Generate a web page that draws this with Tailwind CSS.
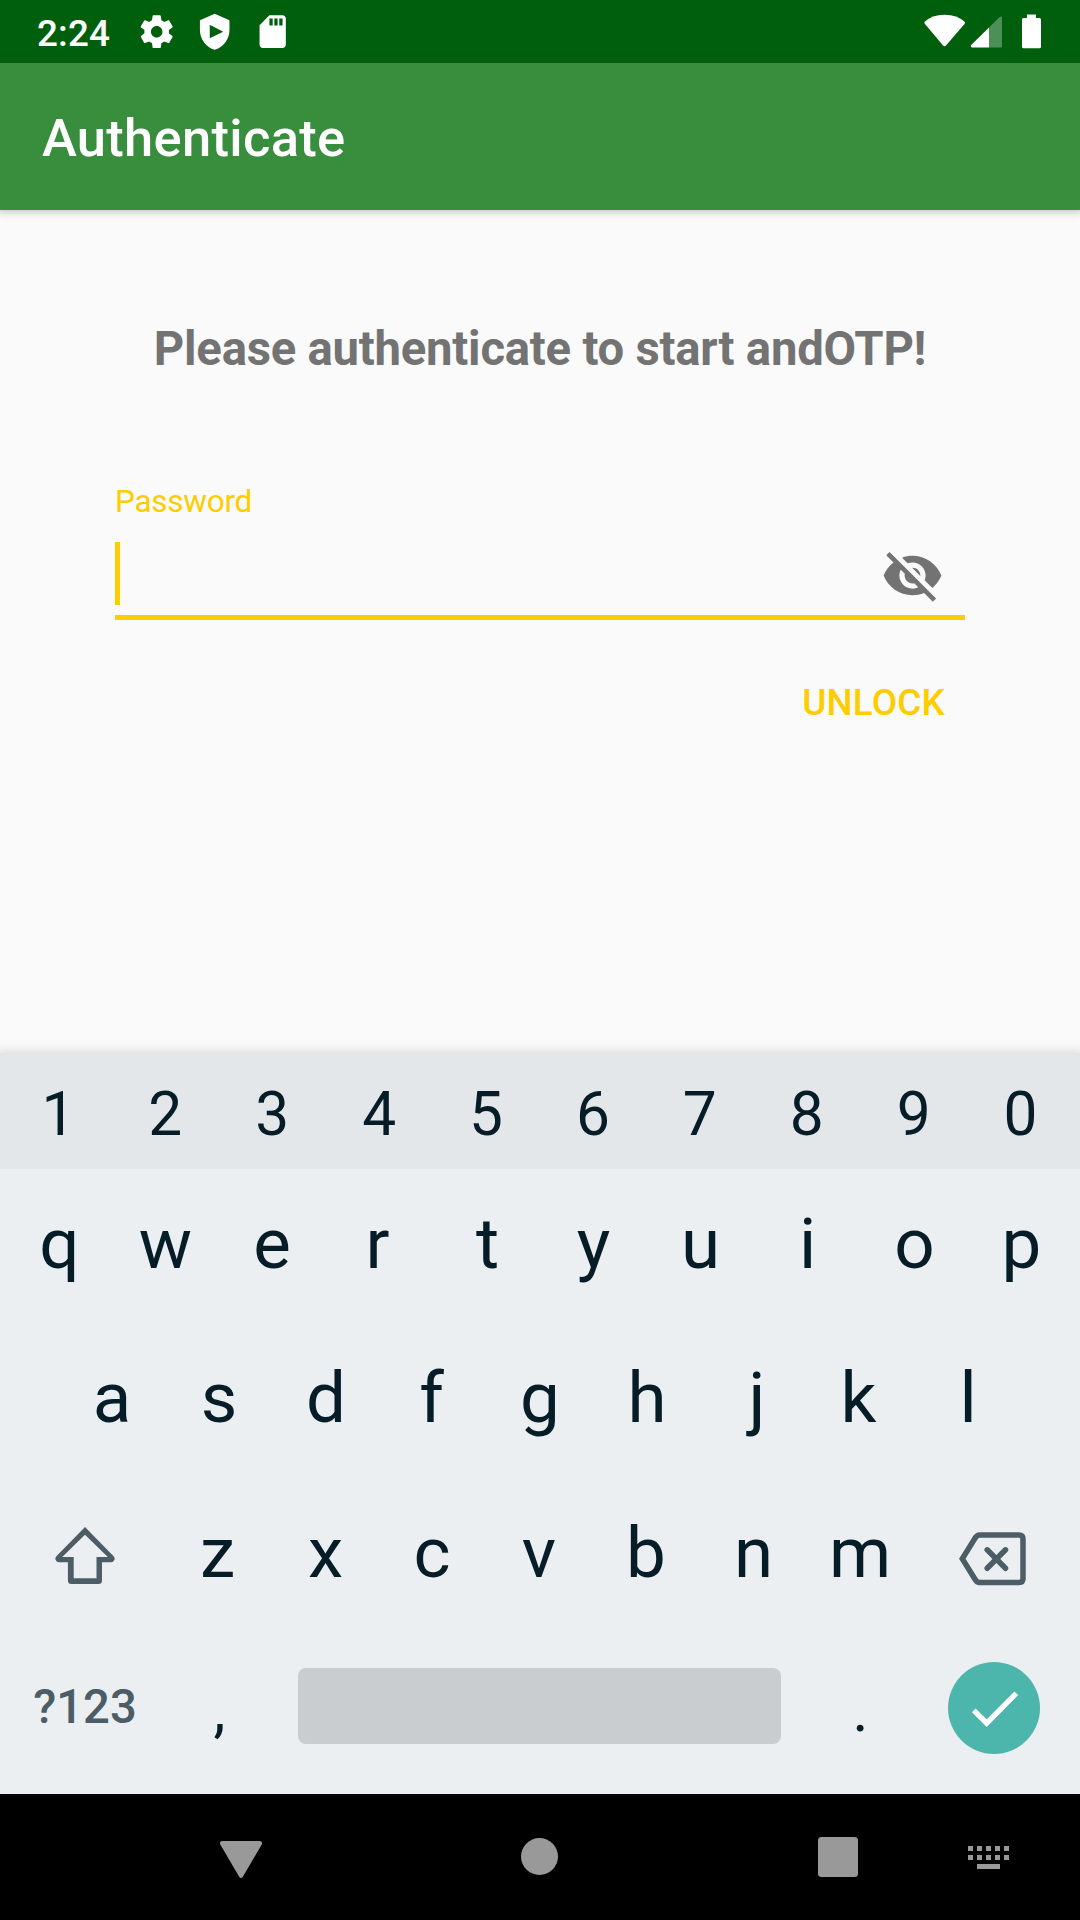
<!DOCTYPE html>
<html lang="en">
<head>
<meta charset="utf-8">
<title>Authenticate</title>
<script src="https://cdn.jsdelivr.net/npm/@tailwindcss/browser@4"></script>
</head>
<body class="w-[1080px] h-[1920px] overflow-hidden bg-[#fafafa] font-['Roboto',sans-serif] flex flex-col">

<!-- Status bar -->
<header class="relative z-10 h-[63px] shrink-0 bg-[#005f0d] flex items-center justify-between pl-[37px] text-white">
  <div class="flex items-center h-full">
    <span class="w-[100px] text-[36.75px] leading-[63px] font-medium pt-[4px] tracking-[0.2px]">2:24</span>
    <div class="flex gap-[18.4px] fill-white">
      <svg class="w-[39.4px] h-[39.4px]" viewBox="0 0 24 24"><path d="M19.43 12.98c.04-.32.07-.64.07-.98s-.03-.66-.07-.98l2.11-1.65c.19-.15.24-.42.12-.64l-2-3.46c-.12-.22-.39-.3-.61-.22l-2.49 1c-.52-.4-1.08-.73-1.69-.98l-.38-2.65C14.46 2.18 14.25 2 14 2h-4c-.25 0-.46.18-.49.42l-.38 2.65c-.61.25-1.17.59-1.69.98l-2.49-1c-.23-.09-.49 0-.61.22l-2 3.46c-.13.22-.07.49.12.64l2.11 1.65c-.04.32-.07.65-.07.98s.03.66.07.98l-2.11 1.65c-.19.15-.24.42-.12.64l2 3.46c.12.22.39.3.61.22l2.49-1c.52.4 1.08.73 1.69.98l.38 2.65c.03.24.24.42.49.42h4c.25 0 .46-.18.49-.42l.38-2.65c.61-.25 1.17-.59 1.69-.98l2.49 1c.23.09.49 0 .61-.22l2-3.46c.12-.22.07-.49-.12-.64l-2.11-1.65zM12 15.5c-1.93 0-3.5-1.57-3.5-3.5s1.57-3.5 3.5-3.5 3.5 1.57 3.5 3.5-1.57 3.5-3.5 3.5z"/></svg>
      <svg class="w-[39.4px] h-[39.4px]" viewBox="0 0 24 24"><path fill-rule="evenodd" d="M12 1 3 5v6c0 5.55 3.84 10.74 9 12 5.16-1.26 9-6.45 9-12V5l-9-4zM9 7.8 17.2 12 9 16z"/></svg>
      <svg class="w-[39.4px] h-[39.4px]" viewBox="0 0 24 24"><path fill-rule="evenodd" d="M18 2h-8L4 8v12c0 1.1.9 2 2 2h12c1.1 0 2-.9 2-2V4c0-1.1-.9-2-2-2zM10 4h2v4.3h-2zM13 4h2v4.3h-2zM16 4h2v4.3h-2z"/></svg>
    </div>
  </div>
  <svg class="w-[120px] h-[36px] mr-[38px]" viewBox="922 13.500 120 36" fill="#fff">
    <path d="M924.400 21.500Q932 14.200 944.500 14.200T965 21.500Q965.300 22.500 964.500 23.500L946 45Q944.500 46.500 943 45L925 23.500Q924.200 22.500 924.400 21.500Z"/>
    <path fill-opacity=".3" d="M989 27 999.600 16.600Q1002 15 1002 18V45.500Q1002 47 1000.500 47H989Z"/>
    <path d="M989 27V47H972Q970 46.500 971.200 44.600Z"/>
    <path d="M1027 14h9v3.500h3.400q1.600 0 1.600 1.600V46.200q0 1.600-1.600 1.600h-15.800q-1.600 0-1.600-1.600V19.100q0-1.600 1.600-1.600h3.400z"/>
  </svg>
</header>

<!-- App bar -->
<div class="h-[147px] shrink-0 bg-[#388e3c] flex items-center pl-[42px] pt-[3px] shadow-[0_0px_8px_2px_rgba(0,0,0,0.22)]">
  <h1 class="text-[52.5px] leading-[60px] font-medium text-white tracking-[0.3px]">Authenticate</h1>
</div>

<!-- Unlock form -->
<main class="h-[843px] shrink-0 px-[115px] pt-[109px] flex flex-col">
  <h2 class="text-center text-[47.25px] leading-[60px] font-bold text-[#737373] whitespace-nowrap tracking-[-0.23px]">Please authenticate to start andOTP!</h2>
  <label class="mt-[103px] text-[31.5px] leading-[40px] text-[#ffcc00] tracking-[-0.25px]">Password</label>
  <div class="mt-[15px] h-[83px] border-b-[5px] border-[#ffcc00] flex items-start justify-between pr-[21px]">
    <span class="mt-[5px] w-[5px] h-[63px] bg-[#ffcc00]"></span>
    <svg class="mt-[7px] w-[63px] h-[63px] fill-[#737373]" viewBox="0 0 24 24"><path d="M12 7c2.760 0 5 2.240 5 5 0 .65-.13 1.260-.36 1.830l2.920 2.920c1.510-1.260 2.700-2.890 3.430-4.750-1.730-4.390-6-7.500-11-7.500-1.400 0-2.740.25-3.980.7l2.160 2.160C10.740 7.130 11.350 7 12 7zM2 4.270l2.280 2.280.46.46C3.080 8.300 1.780 10.020 1 12c1.730 4.390 6 7.500 11 7.500 1.550 0 3.030-.3 4.380-.84l.42.42L19.730 22 21 20.730 3.270 3 2 4.270zM7.530 9.800l1.550 1.550c-.05.21-.08.43-.08.65 0 1.660 1.340 3 3 3 .22 0 .44-.03.65-.08l1.550 1.550c-.67.33-1.410.53-2.200.53-2.760 0-5-2.240-5-5 0-.79.2-1.530.53-2.200zm4.310-.78l3.150 3.150.02-.16c0-1.660-1.340-3-3-3l-.17.010z"/></svg>
  </div>
  <button class="self-end mr-[20px] mt-[58px] text-[36.75px] leading-[50px] font-medium text-[#ffcc00] tracking-[0.25px]">UNLOCK</button>
</main>

<!-- Keyboard -->
<section class="h-[741px] shrink-0 bg-[#ebeff2] text-[#061d27] shadow-[0_0_9px_3px_rgba(0,0,0,0.1)]">
  <div class="h-[116px] bg-[#e3e7ea] pl-[5px] pr-[6px] pt-[7px] grid grid-cols-10 items-center text-center text-[60.4px] leading-[70px]">
    <span>1</span><span>2</span><span>3</span><span>4</span><span>5</span><span>6</span><span>7</span><span>8</span><span>9</span><span>0</span>
  </div>
  <div class="h-[150px] pl-[5px] pr-[5px] grid grid-cols-10 items-center text-center text-[70.9px] leading-[80px]">
    <span class="pl-[2px]">q</span><span>w</span><span class="pr-[1px]">e</span><span class="pr-[4px]">r</span><span class="pl-[2px]">t</span><span>y</span><span>u</span><span>i</span><span>o</span><span>p</span>
  </div>
  <div class="h-[158px] pl-[58.5px] pr-[58.5px] grid grid-cols-9 items-center text-center text-[70.9px] leading-[80px]">
    <span>a</span><span>s</span><span>d</span><span class="pr-[3px]">f</span><span>g</span><span>h</span><span class="pl-[6px]">j</span><span class="pr-[5px]">k</span><span>l</span>
  </div>
  <div class="h-[152px] pl-[5px] pr-[6px] grid grid-cols-[160px_repeat(7,1fr)_160px] items-center text-center text-[70.9px] leading-[80px]">
    <svg class="w-[60px] h-[60px] justify-self-center mt-[6px]" viewBox="0 0 60 60" fill="#4c5d66"><path fill-rule="evenodd" d="M30 1 58.600 30.200A3.600 3.600 0 0 1 56 36.300H47V54.500A3.500 3.500 0 0 1 43.500 58H16.400A3.500 3.500 0 0 1 12.900 54.500V36.300H4A3.600 3.600 0 0 1 1.400 30.200ZM30 8.700 7.200 31H18.700V52.300H41.500V31H52.800Z"/></svg>
    <span class="pr-[2px]">z</span><span>x</span><span class="pr-[1px]">c</span><span class="pr-[1px]">v</span><span class="pr-[1px]">b</span><span>n</span><span class="pr-[1px]">m</span>
    <svg class="w-[68px] h-[56px] justify-self-center mt-[12px] mr-[2px]" viewBox="0 0 68 56" fill="none" stroke="#4c5d66" stroke-width="5.500" stroke-linecap="round"><path d="M3.300 27.700 16 7.300Q18 4 20.500 4H60Q64 4 64 8V47.500Q64 51.500 60 51.500H20.500Q18 51.500 16 48.200Z"/><path d="M28.200 18.800 46.500 37.300M46.500 18.800 28.200 37.300"/></svg>
  </div>
  <div class="h-[154px] pl-[5px] pr-[6px] grid grid-cols-[160px_107px_1fr_107px_160px] items-center text-center text-[60.4px] leading-[70px]">
    <span class="pt-[2px] text-[47.25px] font-medium text-[#4c5d66]">?123</span>
    <span class="pt-[9px] pl-[2px]">,</span>
    <span class="h-[76px] mx-[26px] rounded-[8px] bg-[#c9cdd0]"></span>
    <span class="pt-[9px]">.</span>
    <span class="w-[92px] h-[92px] mt-[4px] justify-self-center rounded-full bg-[#4db6ac]">
      <svg class="w-[92px] h-[92px]" viewBox="0 0 92 92" fill="none" stroke="#fff" stroke-width="5.300"><path d="M25.800 48.300 38.700 61.200 68.300 31.300"/></svg>
    </span>
  </div>
</section>

<!-- Navigation bar -->
<nav class="h-[126px] shrink-0 bg-black">
  <svg class="w-[1080px] h-[126px]" viewBox="0 1794 1080 126" fill="#999">
    <path d="M222 1841H260Q263 1841.500 261.800 1844.500L243 1876.500Q241 1879.500 239 1876.500L220.300 1844.500Q219 1841.500 222 1841Z"/>
    <circle cx="539.500" cy="1856.500" r="18.500"/>
    <rect x="818" y="1837" width="40" height="40" rx="3.500"/>
    <path d="M968 1846h5v5h-5zM977 1846h5v5h-5zM986 1846h5v5h-5zM995 1846h5v5h-5zM1004 1846h5v5h-5zM968 1855h5v5h-5zM977 1855h5v5h-5zM986 1855h5v5h-5zM995 1855h5v5h-5zM1004 1855h5v5h-5zM977 1864h23v5h-23z"/>
  </svg>
</nav>
</body>
</html>
